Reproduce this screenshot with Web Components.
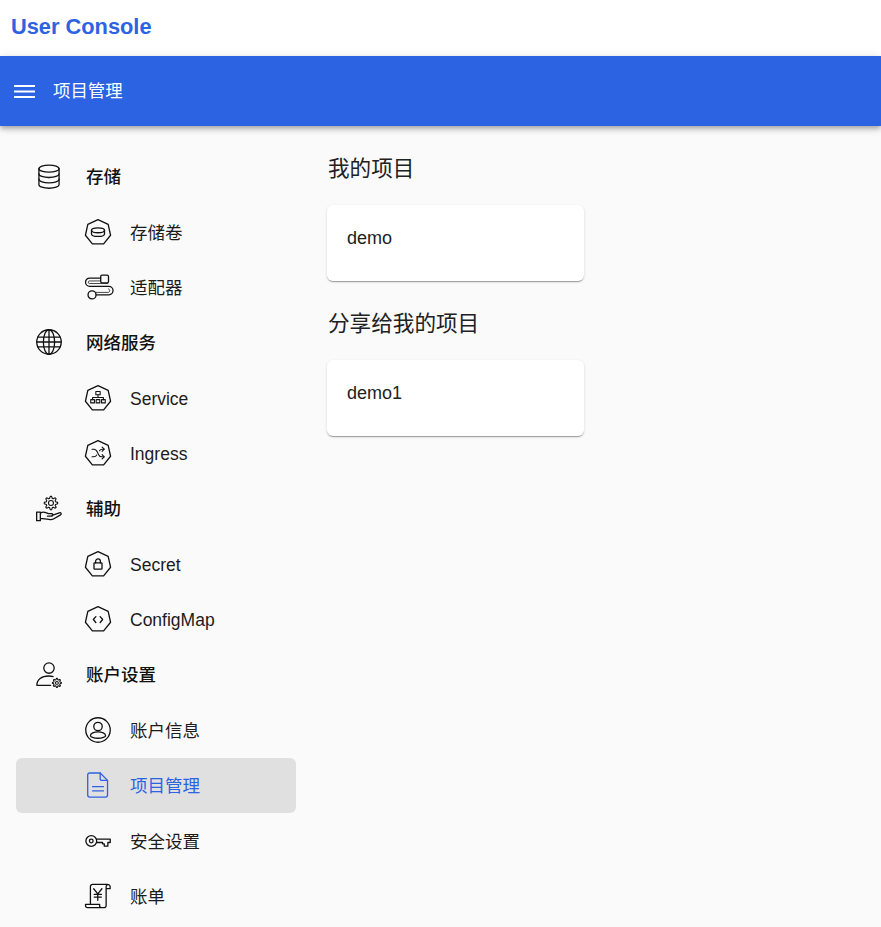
<!DOCTYPE html>
<html lang="zh">
<head>
<meta charset="utf-8">
<title>User Console</title>
<style>
  html, body { margin: 0; height: 100%; }
  body {
    background: #fafafa;
    font-family: "Liberation Sans", "Noto Sans CJK SC", sans-serif;
    color: #212121;
    overflow: hidden;
  }
</style>
</head>
<body>
<app-shell>
  <top-bar slot="top">User Console</top-bar>
  <app-bar slot="bar">项目管理</app-bar>
  <side-nav slot="nav">
    <nav-item icon="db" group>存储</nav-item>
    <nav-item icon="volume">存储卷</nav-item>
    <nav-item icon="adapter">适配器</nav-item>
    <nav-item icon="globe" group>网络服务</nav-item>
    <nav-item icon="service" latin>Service</nav-item>
    <nav-item icon="ingress" latin>Ingress</nav-item>
    <nav-item icon="hand" group>辅助</nav-item>
    <nav-item icon="secret" latin>Secret</nav-item>
    <nav-item icon="configmap" latin>ConfigMap</nav-item>
    <nav-item icon="usergear" group>账户设置</nav-item>
    <nav-item icon="account">账户信息</nav-item>
    <nav-item icon="doc" active>项目管理</nav-item>
    <nav-item icon="key">安全设置</nav-item>
    <nav-item icon="bill">账单</nav-item>
  </side-nav>
  <project-section title="我的项目">
    <project-card>demo</project-card>
  </project-section>
  <project-section title="分享给我的项目">
    <project-card>demo1</project-card>
  </project-section>
</app-shell>

<script>
const HEPT = "M12 .6 21.4 5 23.6 15 17.2 23H6.800L.4 15 2.600 5Z";

// gear outline, n teeth around (cx, cy)
function gear(cx, cy, outer, inner, n) {
  let d = "";
  for (let i = 0; i < n * 4; i++) {
    const r = i % 4 < 2 ? outer : inner;
    const a = ((i - 0.5) / (n * 4)) * Math.PI * 2;
    d += (i ? "L" : "M") + (cx + r * Math.cos(a)).toFixed(2) + " " + (cy + r * Math.sin(a)).toFixed(2);
  }
  return d + "Z";
}

const ICONS = {
  db: `<ellipse cx="12" cy="5.200" rx="9.300" ry="3.300"/><path d="M2.700 5.200v14.800c0 1.800 4.200 3.300 9.300 3.300s9.300-1.500 9.300-3.300V5.200"/><path d="M2.700 10.100c0 1.800 4.200 3.300 9.300 3.300s9.300-1.500 9.300-3.300"/><path d="M2.700 15c0 1.800 4.200 3.300 9.300 3.300s9.300-1.500 9.300-3.300"/>`,
  volume: `<path d="${HEPT}"/><ellipse cx="12" cy="10.400" rx="6" ry="2.300"/><path d="M6 10.400v3.400c0 1.300 2.700 2.300 6 2.300s6-1 6-2.300v-3.400"/>`,
  adapter: `<rect x="14.500" y="1" width="7.200" height="7.200" rx="1.300"/><circle cx="6.500" cy="19.300" r="3.700"/><path d="M14.500 3.800H4.300a3.800 3.800 0 0 0 0 7.600h17.700a3.900 3.900 0 0 1 0 7.800H10.200"/><path d="M14.500 6.400H4.300a1.200 1.200 0 0 0 0 2.400h16.800" stroke-width=".7"/><path d="M21.700 13.700a1.800 1.800 0 0 1 0 3.300H10.200" stroke-width=".7"/>`,
  globe: `<circle cx="12" cy="12" r="11.300"/><ellipse cx="12" cy="12" rx="5.200" ry="11.300"/><path d="M12 .7v22.600M1.800 7.500h20.400M.7 12h22.600M1.800 16.500h20.400"/>`,
  service: `<path d="${HEPT}"/><rect x="10" y="6" width="4" height="3" stroke-width="1"/><path d="M12 9v2.500M7 13.500v-2h10v2" stroke-width="1"/><rect x="5.300" y="13.500" width="3.400" height="3" stroke-width="1"/><rect x="10.300" y="13.500" width="3.400" height="3" stroke-width="1"/><rect x="15.300" y="13.500" width="3.400" height="3" stroke-width="1"/>`,
  ingress: `<path d="${HEPT}"/><path d="M6.500 8.500h1.700c1.800 0 2.600 1 3.400 3l.8 1.800c.7 1.500 1.500 2.200 3 2.200h2" stroke-width="1"/><path d="M6.500 15.500h1.700c1.200 0 2-.6 2.600-1.700M13.400 10c.6-1 1.300-1.500 2.600-1.500h1.500" stroke-width="1"/><path d="M15.800 6.500l2 2-2 2M15.800 13.500l2 2-2 2" stroke-width="1"/>`,
  secret: `<path d="${HEPT}"/><rect x="8.300" y="11" width="7.400" height="5.800" rx=".6"/><path d="M9.800 11V9.500a2.200 2.200 0 0 1 4.400 0V11"/>`,
  configmap: `<path d="${HEPT}"/><path d="M10 9.800 7.700 12.500l2.300 2.700M14 9.800l2.300 2.700-2.300 2.700"/>`,
  hand: `<path d="${gear(13.800, 6.500, 6.200, 4.400, 8)}" stroke-width="1"/><circle cx="13.800" cy="6.500" r="2.300" stroke-width="1"/><path d="M.6 14.800h3.400v8H.6zM4 16c1.500-1.200 3.200-1.400 5-.7l2.500 1h3c1.400 0 1.400 2.200 0 2.200h-4M14.800 17.800l6.700-2.300c1.600-.5 2.400 1 1.200 1.900l-6.200 3.600c-1.400.8-2.800 1-4.300.6L4 20.600"/>`,
  usergear: `<circle cx="12" cy="5.600" r="4.800"/><path d="M.8 21.500c0-5.200 4.300-8.600 11-8.600 1.500 0 2.800.2 4 .6M.8 21.500h12.700"/><path d="${gear(19.300, 19.300, 4.200, 3, 8)}" stroke-width="1"/><circle cx="19.300" cy="19.300" r="1.300" stroke-width="1"/>`,
  account: `<circle cx="12" cy="12" r="11.300"/><circle cx="12" cy="8.800" r="3.900"/><path d="M5 17.200c0-2.100 3.400-3.400 7-3.400s7 1.300 7 3.400c0 1-3 2.400-7 2.400s-7-1.400-7-2.400z"/>`,
  doc: `<path d="M4.300 .9h9.700l6.800 6.800V21.300a1.800 1.800 0 0 1-1.800 1.800H4.300a1.800 1.800 0 0 1-1.800-1.800V2.700A1.800 1.800 0 0 1 4.300 .9z"/><path d="M14 .9v5a1.800 1.800 0 0 0 1.800 1.800h5"/><path d="M7 13.500h10M7 17.500h10"/>`,
  key: `<circle cx="5.800" cy="12" r="5"/><circle cx="5.800" cy="12" r="1.700"/><path d="M10.700 10.200H23.300v3.200h-2.200v3.400h-3.300v-2.200h-1.600v-1.200h-5.500"/>`,
  bill: `<path d="M5 19.700V3.300A2 2 0 0 1 7 1.300h14a2.200 2.200 0 0 1 2.200 2.200v1.700h-3.700M19.500 3.500c0-1.200.6-1.800 1.500-2.200M19.500 3.500v17.300a2 2 0 0 1-2 2H2.300a1.800 1.800 0 0 1-1.800-1.800v-1.300h13v1.300a1.800 1.800 0 0 0 1.800 1.800"/><path d="M8 5.300l3.800 4.700 3.800-4.700M11.800 10v6M8.500 10.500h6.600M8.500 13h6.600" stroke-width="1.200"/>`
};

class AppShell extends HTMLElement {
  constructor() {
    super();
    this.attachShadow({ mode: "open" });
    this.shadowRoot.innerHTML = `
      <style>
        :host { display: flex; flex-direction: column; height: 927px; }
        .body { display: flex; flex: 1; min-height: 0; }
        .nav { flex: 0 0 312px; }
        main { flex: 1; padding: 27px 0 0 15px; }
      </style>
      <slot name="top"></slot>
      <slot name="bar"></slot>
      <div class="body">
        <div class="nav"><slot name="nav"></slot></div>
        <main><slot></slot></main>
      </div>`;
  }
}

class TopBar extends HTMLElement {
  constructor() {
    super();
    this.attachShadow({ mode: "open" });
    this.shadowRoot.innerHTML = `
      <style>
        :host {
          display: flex;
          align-items: center;
          box-sizing: border-box;
          height: 56px;
          padding: 0 0 2px 11px;
          background: #fff;
          color: #2c63e3;
          font-size: 21.800px;
          font-weight: 700;
        }
      </style>
      <slot></slot>`;
  }
}

class AppBar extends HTMLElement {
  constructor() {
    super();
    this.attachShadow({ mode: "open" });
    this.shadowRoot.innerHTML = `
      <style>
        :host {
          display: flex;
          align-items: center;
          gap: 18px;
          height: 70px;
          padding-left: 14px;
          background: #2c63e3;
          color: #fff;
          font-size: 17.400px;
          position: relative;
          z-index: 1;
          box-shadow: 0 2px 4px -1px rgba(0,0,0,.2), 0 4px 5px rgba(0,0,0,.14), 0 1px 10px rgba(0,0,0,.12);
        }
        svg { width: 21px; height: 15px; display: block; }
        span { padding-bottom: 3px; }
      </style>
      <svg viewBox="0 0 21 15" fill="none" stroke="currentColor" stroke-width="2">
        <path d="M0 2h21M0 7.500h21M0 13h21"/>
      </svg>
      <span><slot></slot></span>`;
  }
}

class SideNav extends HTMLElement {
  constructor() {
    super();
    this.attachShadow({ mode: "open" });
    this.shadowRoot.innerHTML = `
      <style>
        :host { display: flex; flex-direction: column; padding: 22.700px 16px 0; }
      </style>
      <slot></slot>`;
  }
}

class NavItem extends HTMLElement {
  constructor() {
    super();
    this.attachShadow({ mode: "open" });
  }

  connectedCallback() {
    const icon = ICONS[this.getAttribute("icon")] || "";
    this.shadowRoot.innerHTML = `
      <style>
        :host {
          display: flex;
          align-items: center;
          height: 55.360px;
          padding-left: 69px;
          border-radius: 6px;
          font-size: 17.500px;
          color: #1c1c1c;
        }
        :host([group]) { padding-left: 20px; font-weight: 500; color: #111; }
        :host([active]) { background: #e0e0e0; color: #2c63e3; }
        .icon { flex: 0 0 26px; width: 26px; height: 26px; margin-right: 19px; }
        :host([group]) .icon { margin-right: 24px; }
        .label { padding-bottom: 1px; }
        :host([group]) .label { padding-bottom: 2px; }
        :host([latin]) .label { padding: 3px 0 0; }
        svg { display: block; width: 26px; height: 26px; overflow: visible; color: #111; }
        :host([active]) svg { color: #2c63e3; }
      </style>
      <span class="icon">
        <svg viewBox="0 0 24 24" fill="none" stroke="currentColor" stroke-width="1.200" stroke-linejoin="round" stroke-linecap="round">${icon}</svg>
      </span>
      <span class="label"><slot></slot></span>`;
  }
}

class ProjectSection extends HTMLElement {
  constructor() {
    super();
    this.attachShadow({ mode: "open" });
  }

  connectedCallback() {
    this.shadowRoot.innerHTML = `
      <style>
        :host { display: block; margin-bottom: 27px; }
        h2 {
          margin: 0 0 22px 1px;
          height: 30px;
          line-height: 31px;
          font-size: 21.600px;
          font-weight: 400;
          color: #212121;
        }
      </style>
      <h2>${this.getAttribute("title")}</h2>
      <slot></slot>`;
  }
}

class ProjectCard extends HTMLElement {
  constructor() {
    super();
    this.attachShadow({ mode: "open" });
    this.shadowRoot.innerHTML = `
      <style>
        :host {
          display: block;
          box-sizing: border-box;
          width: 257px;
          height: 76px;
          padding: 22px 20px;
          background: #fff;
          border-radius: 6px;
          font-size: 18px;
          line-height: 22px;
          color: #212121;
          box-shadow: 0 2px 1px -1px rgba(0,0,0,.2), 0 1px 1px rgba(0,0,0,.14), 0 1px 3px rgba(0,0,0,.12);
        }
      </style>
      <slot></slot>`;
  }
}

customElements.define("app-shell", AppShell);
customElements.define("top-bar", TopBar);
customElements.define("app-bar", AppBar);
customElements.define("side-nav", SideNav);
customElements.define("nav-item", NavItem);
customElements.define("project-section", ProjectSection);
customElements.define("project-card", ProjectCard);
</script>
</body>
</html>
